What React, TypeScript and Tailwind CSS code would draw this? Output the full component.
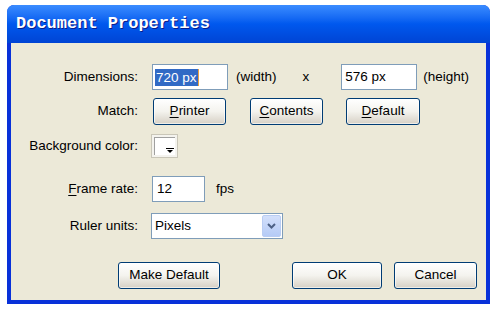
import type { ReactNode } from "react";

const ui = "font-['Liberation_Sans',Arial,sans-serif] text-[13.5px] text-black";

function XpButton({ children, className = "" }: { children: ReactNode; className?: string }) {
  return (
    <button
      type="button"
      className={`flex h-[27px] items-center justify-center rounded-[3px] border border-[#003c74] bg-gradient-to-b from-white via-[#f4f3ee] to-[#d6d0c5] shadow-[inset_0_0_0_1px_rgba(255,255,255,0.6)] ${className}`}
    >
      {children}
    </button>
  );
}

function Label({ children }: { children: ReactNode }) {
  return <div className="w-[127px] shrink-0 text-right">{children}</div>;
}

function Mn({ children }: { children: ReactNode }) {
  return <span className="underline underline-offset-2">{children}</span>;
}

export default function App() {
  return (
    <div className={`h-[312px] w-[500px] bg-white pl-[7px] pt-[5px] ${ui}`}>
      <div className="flex h-[299px] w-[483px] flex-col overflow-hidden rounded-t-[7px] bg-[#0831d9]">
        {/* title bar */}
        <div className="flex h-[38px] shrink-0 items-center bg-gradient-to-b from-[#3a8cff] via-[#0058ee] to-[#0044d4] pl-[9px]">
          <span className="font-['Liberation_Mono',monospace] text-[17px] font-bold text-white [text-shadow:1px_1px_0_#0a1e8c]">
            Document Properties
          </span>
        </div>

        {/* body */}
        <div className="mx-[4px] mb-[4px] flex flex-1 flex-col bg-[#ece9d8]">
          <div className="mt-[21px] flex h-[26px] items-center">
            <Label>Dimensions:</Label>
            <div className="ml-[14px] flex h-[26px] w-[76px] items-center border border-[#7f9db9] bg-white pl-[2px]">
              <span className="bg-[#316ac5] px-[1px] leading-[17px] text-white">720 px</span>
              <span className="h-[17px] w-[1px] bg-[#e8a040]" />
            </div>
            <span className="ml-[8px]">(width)</span>
            <span className="ml-[26px]">x</span>
            <div className="ml-[32px] flex h-[26px] w-[76px] items-center border border-[#7f9db9] bg-white pl-[3px]">
              576 px
            </div>
            <span className="ml-[6px]">(height)</span>
          </div>

          <div className="mt-[8px] flex h-[27px] items-center">
            <Label>Match:</Label>
            <XpButton className="ml-[15px] w-[73px]">
              <span>
                <Mn>P</Mn>rinter
              </span>
            </XpButton>
            <XpButton className="ml-[24px] w-[73px]">
              <span>
                <Mn>C</Mn>ontents
              </span>
            </XpButton>
            <XpButton className="ml-[23px] w-[74px]">
              <span>
                <Mn>D</Mn>efault
              </span>
            </XpButton>
          </div>

          <div className="mt-[9px] flex h-[24px] items-center">
            <div className="w-[127px] shrink-0 text-right">Background color:</div>
            <div className="ml-[13px] h-[24px] w-[27px] border border-[#c9c6b8] bg-[#f4f3ee] p-[2px]">
              <div className="relative h-full w-full border-l border-t border-[#a0a0a0] bg-white">
                <svg className="absolute bottom-[1px] right-[1px]" width="8" height="6" viewBox="0 0 8 6">
                  <rect x="0" y="0" width="8" height="1" fill="#000" />
                  <path d="M1 2h6L4 5z" fill="#000" />
                </svg>
              </div>
            </div>
          </div>

          <div className="mt-[18px] flex h-[26px] items-center">
            <Label>
              <Mn>F</Mn>rame rate:
            </Label>
            <div className="ml-[14px] flex h-[26px] w-[53px] items-center border border-[#7f9db9] bg-white pl-[4px]">
              12
            </div>
            <span className="ml-[11px]">fps</span>
          </div>

          <div className="mt-[11px] flex h-[26px] items-center">
            <Label>Ruler units:</Label>
            <div className="ml-[13px] flex h-[26px] w-[132px] items-center border border-[#7f9db9] bg-white pl-[3px]">
              <span className="flex-1">Pixels</span>
              <div className="mr-[1px] flex h-[22px] w-[19px] items-center justify-center rounded-[2px] border border-[#b9cdf3] bg-gradient-to-b from-[#d3e0fb] to-[#b5cbf6]">
                <svg width="9" height="6" viewBox="0 0 9 6">
                  <path d="M1 1l3.5 3.5L8 1" fill="none" stroke="#4d6185" strokeWidth="2" />
                </svg>
              </div>
            </div>
          </div>

          <div className="mt-[23px] flex h-[27px] items-center pl-[107px]">
            <XpButton className="w-[102px]">Make Default</XpButton>
            <XpButton className="ml-[72px] w-[90px]">OK</XpButton>
            <XpButton className="ml-[12px] w-[83px]">Cancel</XpButton>
          </div>
        </div>
      </div>
    </div>
  );
}
